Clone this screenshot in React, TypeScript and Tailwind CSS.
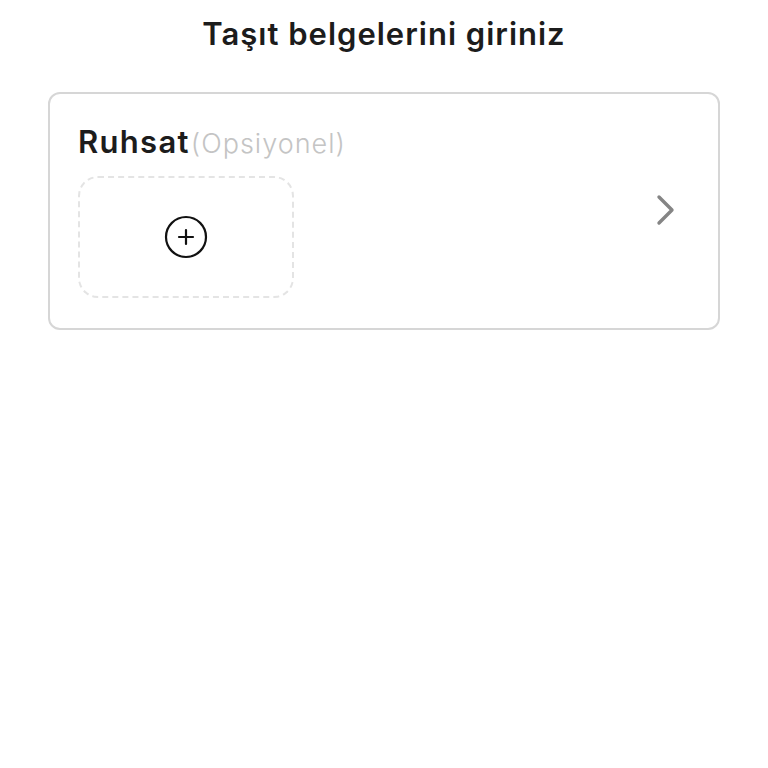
export default function App() {
  return (
    <div className="min-h-screen bg-white" style={{ fontFamily: 'Inter, "Open Sans", sans-serif' }}>
      <h1 className="pt-[14px] text-center text-[31px] font-semibold leading-[40px] tracking-[1px] text-[#1c1c1c]">
        Taşıt belgelerini giriniz
      </h1>
      <div className="mx-[48px] mt-[38px] flex items-center rounded-[12px] border-2 border-[#d6d6d6] pl-[28px] pr-[42px] pt-[28px] pb-[30px]">
        <div className="flex-1">
          <div className="flex items-baseline">
            <span className="text-[31px] font-semibold leading-[40px] tracking-[1.3px] text-[#1c1c1c]">Ruhsat</span>
            <span className="ml-[1px] text-[27px] font-light leading-[40px] tracking-[1px] text-[#c4c4c4]">(Opsiyonel)</span>
          </div>
          <div className="mt-[12px] flex h-[122px] w-[216px] items-center justify-center rounded-[20px] border-2 border-dashed border-[#e4e4e4]">
            <svg width="44" height="44" viewBox="0 0 44 44" fill="none" stroke="#111" strokeWidth="2.2">
              <circle cx="22" cy="22" r="20" />
              <path d="M22 15v14M15 22h14" strokeLinecap="round" />
            </svg>
          </div>
        </div>
        <svg width="20" height="32" viewBox="0 0 20 32" fill="none" stroke="#858585" strokeWidth="3.4" strokeLinecap="round" strokeLinejoin="round">
          <path d="M3 3l13 13L3 29" />
        </svg>
      </div>
    </div>
  );
}
